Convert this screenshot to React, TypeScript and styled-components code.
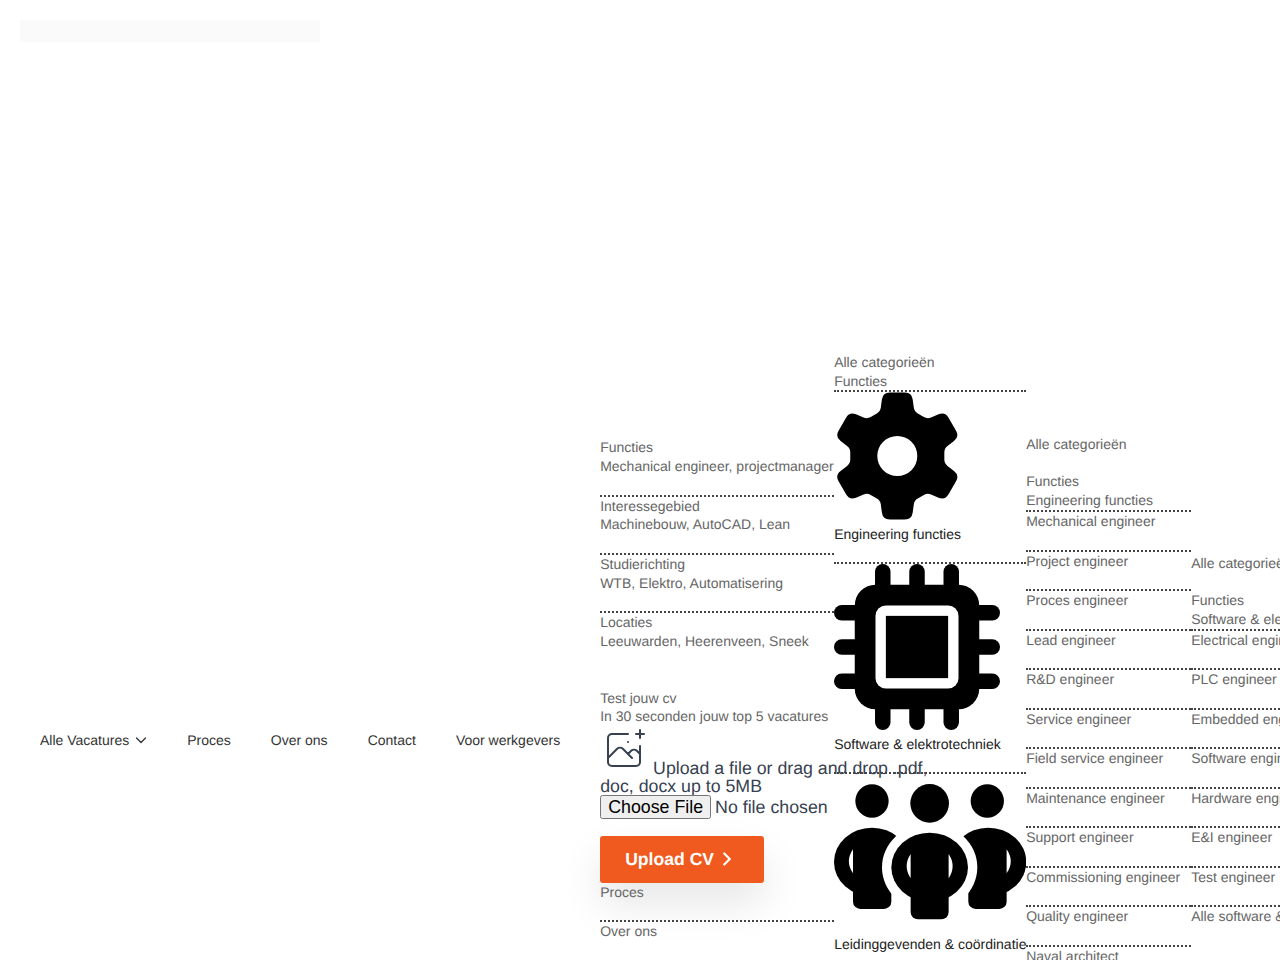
import React from "react";
import styled, { createGlobalStyle } from "styled-components";
import { ChevronRight } from "lucide-react";

const Global = createGlobalStyle`
  html, body { margin: 0; padding: 0; overflow: hidden; height: 960px; background: #fff; }
  body { font-family: "Liberation Sans", Arial, sans-serif; font-size: 14px; line-height: 18.77px; color: #666; text-rendering: geometricPrecision; }
  input, button { text-rendering: geometricPrecision; }
`;

const Header = styled.header`
  display: flex;
  flex-direction: column;
  width: 1280px;
`;
const Logo = styled.div`
  width: 300px;
  height: 22px;
  margin: 20px 0 0 20px;
  background: #fafafa;
`;
const Row = styled.div`
  display: flex;
  align-items: center;
  height: 776px;
  margin-top: 310.5px;
`;
const Nav = styled.nav`
  display: flex;
  align-items: center;
  gap: 40px;
  flex-shrink: 0;
  padding: 0 40px;
`;
const NavLink = styled.a`
  display: flex;
  align-items: center;
  gap: 6px;
  color: #333;
  white-space: nowrap;
`;
const Caret = styled.svg`
  width: 12px;
  height: 7px;
  margin-top: 1px;
  flex-shrink: 0;
`;
const Column = styled.div<{ $w: number; $h: number }>`
  flex-shrink: 0;
  width: ${(p) => p.$w}px;
  min-height: ${(p) => p.$h}px;
`;
const Line = styled.div`
  white-space: nowrap;
`;
const Blank = styled.div`
  height: 18.77px;
`;
const Item = styled.div<{ $last?: boolean }>`
  white-space: nowrap;
  padding-bottom: 18.77px;
  border-bottom: ${(p) => (p.$last ? "0" : "2px dotted #444")};
`;
const Ruled = styled.div`
  white-space: nowrap;
  border-bottom: 2px dotted #444;
`;
const Test = styled.div`
  margin-top: 19px;
`;
const UploadLabel = styled.div`
  width: 345px;
  font-size: 17.75px;
  line-height: 18px;
  color: #374151;
`;
const UploadIcon = styled.svg`
  width: 48px;
  height: 48px;
  display: inline;
  color: #374151;
`;
const FileInput = styled.input`
  display: block;
  width: 234px;
  height: 24px;
  font-family: "Liberation Sans", Arial, sans-serif;
  font-size: 17.8px;
  line-height: 24px;
  color: #374151;
  white-space: nowrap;

  &::file-selector-button {
    box-sizing: border-box;
    height: 24px;
    padding: 0 6px;
    margin-right: 4px;
  }
`;
const UploadButton = styled.button`
  display: flex;
  align-items: center;
  gap: 2px;
  width: 164px;
  height: 47px;
  margin-top: 16.8px;
  padding: 0 0 0 25px;
  border: 0;
  border-radius: 3px;
  background: #f15a1e;
  color: #fff;
  font-family: "Liberation Sans", Arial, sans-serif;
  font-size: 17.6px;
  font-weight: 700;
  box-shadow: 0 20px 40px rgba(0, 0, 0, 0.1);
`;
const Category = styled.div`
  color: #222;
  white-space: nowrap;
  padding-bottom: 18.77px;
  border-bottom: 2px dotted #444;
`;
const CategoryIcon = styled.svg`
  display: block;
  margin-bottom: 4.4px;
  color: #000;
`;

type Pt = [number, number];
const roundedPath = (pts: { p: Pt; r: number }[]) => {
  const n = pts.length;
  let d = "";
  pts.forEach(({ p, r }, i) => {
    const a = pts[(i + n - 1) % n].p;
    const b = pts[(i + 1) % n].p;
    const toward = (q: Pt): Pt => {
      const dx = q[0] - p[0];
      const dy = q[1] - p[1];
      const l = Math.hypot(dx, dy);
      return [p[0] + (dx / l) * r, p[1] + (dy / l) * r];
    };
    const s = toward(a);
    const e = toward(b);
    d += `${i === 0 ? "M" : "L"}${s[0].toFixed(2)} ${s[1].toFixed(2)}Q${p[0]} ${p[1]} ${e[0].toFixed(2)} ${e[1].toFixed(2)}`;
  });
  return d + "Z";
};
const gearPoints = () => {
  const tooth: { p: Pt; r: number }[] = [
    { p: [-17, -44.5], r: 4 },
    { p: [-14.5, -63.5], r: 7 },
    { p: [14.5, -63.5], r: 7 },
    { p: [17, -44.5], r: 4 },
  ];
  const out: { p: Pt; r: number }[] = [];
  for (let k = 0; k < 6; k++) {
    const t = (k * Math.PI) / 3;
    tooth.forEach(({ p, r }) => {
      out.push({
        p: [+(p[0] * Math.cos(t) - p[1] * Math.sin(t)).toFixed(2), +(p[0] * Math.sin(t) + p[1] * Math.cos(t)).toFixed(2)],
        r,
      });
    });
  }
  return out;
};
const gearPath = roundedPath(gearPoints()) + "M20 0A20 20 0 1 0 -20 0A20 20 0 1 0 20 0Z";

const Gear = () => (
  <CategoryIcon width="127" height="128" viewBox="-63.3 -64 127 128">
    <path d={gearPath} fill="currentColor" fillRule="evenodd" />
  </CategoryIcon>
);

const Chip = () => {
  const c = [7.05, 12, 16.95];
  return (
    <CategoryIcon width="166" height="166" viewBox="0 0 24 24">
      {c.map((v) => (
        <React.Fragment key={v}>
          <rect x={v - 1.12} y="0" width="2.24" height="24" rx="1.12" fill="currentColor" />
          <rect x="0" y={v - 1.12} width="24" height="2.24" rx="1.12" fill="currentColor" />
        </React.Fragment>
      ))}
      <rect x="3" y="3" width="18" height="18" rx="3" fill="currentColor" />
      <rect x="6" y="6" width="12" height="12" rx="1.5" fill="#fff" />
      <rect x="7.5" y="7.5" width="9" height="9" fill="currentColor" />
    </CategoryIcon>
  );
};

const People = () => (
  <CategoryIcon width="192.3" height="156" viewBox="28 42 577 468">
    <g fill="currentColor">
      <circle cx="142" cy="123" r="50" />
      <circle cx="488" cy="123" r="50" />
      <circle cx="315" cy="130" r="58" />
      <ellipse cx="142" cy="306" rx="114" ry="103" />
      <ellipse cx="491" cy="306" rx="114" ry="103" />
      <rect x="85" y="340" width="115" height="107" rx="22" />
      <rect x="431" y="340" width="115" height="107" rx="22" />
    </g>
    <ellipse cx="315" cy="322" rx="143" ry="132" fill="#fff" />
    <g fill="currentColor">
      <ellipse cx="315" cy="322" rx="115" ry="104" />
      <rect x="258" y="360" width="114" height="118" rx="22" />
    </g>
    <g fill="#fff">
      <path d="M85 268Q60 304 85 340Z" />
      <path d="M546 268Q571 304 546 340Z" />
      <path d="M258 282Q234 318 258 355Z" />
      <path d="M372 282Q396 318 372 355Z" />
    </g>
  </CategoryIcon>
);

const Pair = ({ a, b, last }: { a: string; b: string; last?: boolean }) => (
  <Item $last={last}>
    <Line>{a}</Line>
    <Line>{b}</Line>
  </Item>
);

const engineering = [
  "Mechanical engineer",
  "Project engineer",
  "Proces engineer",
  "Lead engineer",
  "R&D engineer",
  "Service engineer",
  "Field service engineer",
  "Maintenance engineer",
  "Support engineer",
  "Commissioning engineer",
  "Quality engineer",
];
const software = [
  "Electrical engineer",
  "PLC engineer",
  "Embedded engineer",
  "Software engineer",
  "Hardware engineer",
  "E&I engineer",
  "Test engineer",
];

export default function App() {
  return (
    <Header>
      <Global />
      <Logo />
      <Row>
        <Nav>
          <NavLink>
            Alle Vacatures
            <Caret viewBox="0 0 12 7" fill="none" stroke="#333" strokeWidth="1.3" strokeLinecap="round" strokeLinejoin="round">
              <path d="M1.5 1 6 5.5 10.500 1" />
            </Caret>
          </NavLink>
          <NavLink>Proces</NavLink>
          <NavLink>Over ons</NavLink>
          <NavLink>Contact</NavLink>
          <NavLink>Voor werkgevers</NavLink>
        </Nav>

        <Column $w={234} $h={604.2}>
          <Pair a="Functies" b="Mechanical engineer, projectmanager" />
          <Pair a="Interessegebied" b="Machinebouw, AutoCAD, Lean" />
          <Pair a="Studierichting" b="WTB, Elektro, Automatisering" />
          <Pair a="Locaties" b="Leeuwarden, Heerenveen, Sneek" last />
          <Test>
            <Line>Test jouw cv</Line>
            <Line>In 30 seconden jouw top 5 vacatures</Line>
            <UploadLabel>
              <UploadIcon viewBox="0 0 48 48" fill="none" stroke="currentColor">
                <path
                  d="M28 8H12a4 4 0 00-4 4v20m32-12v8m0 0v8a4 4 0 01-4 4H12a4 4 0 01-4-4v-4m32-4l-3.172-3.172a4 4 0 00-5.656 0L28 28M8 32l9.172-9.172a4 4 0 015.656 0L28 28m0 0l4 4m4-24h8m-4-4v8m-12 4h.02"
                  strokeWidth="2"
                  strokeLinecap="round"
                  strokeLinejoin="round"
                />
              </UploadIcon>{" "}
              Upload a file or drag and drop .pdf, doc, docx up to 5MB
            </UploadLabel>
            <FileInput type="file" />
            <UploadButton>
              Upload CV <ChevronRight size={22} strokeWidth={2.5} />
            </UploadButton>
          </Test>
          <Item>Proces</Item>
          <Item>Over ons</Item>
          <Item>Contact</Item>
          <Item $last>Voor werkgevers</Item>
        </Column>

        <Column $w={192} $h={775.2}>
          <Line>Alle categorieën</Line>
          <Ruled>Functies</Ruled>
          <Category>
            <Gear />
            Engineering functies
          </Category>
          <Category>
            <Chip />
            Software &amp; elektrotechniek
          </Category>
          <Category>
            <People />
            Leidinggevenden &amp; coördinatie
          </Category>
        </Column>

        <Column $w={165} $h={611.1}>
          <Line>Alle categorieën</Line>
          <Blank />
          <Line>Functies</Line>
          <Ruled>Engineering functies</Ruled>
          {engineering.map((t) => (
            <Item key={t}>{t}</Item>
          ))}
          <Item $last>Naval architect</Item>
        </Column>

        <Column $w={200} $h={374}>
          <Line>Alle categorieën</Line>
          <Blank />
          <Line>Functies</Line>
          <Ruled>Software &amp; elektrotechniek</Ruled>
          {software.map((t) => (
            <Item key={t}>{t}</Item>
          ))}
          <Line>Alle software &amp; elektrotechniek</Line>
        </Column>
      </Row>
    </Header>
  );
}
